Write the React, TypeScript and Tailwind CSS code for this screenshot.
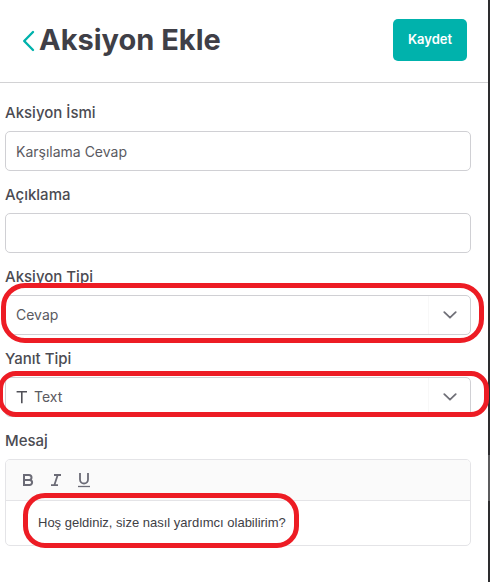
import { useState } from "react";
import type { ReactNode } from "react";

const labelClass = "block text-[15px] leading-5 font-medium text-[#4b4b52]";
const controlClass =
  "block h-10 w-full rounded-[5px] border border-[#d0d0d4] bg-white px-[10px] text-sm text-[#5a5a61] outline-none";

function Highlight({ className }: { className: string }) {
  return (
    <span
      aria-hidden="true"
      className={`pointer-events-none absolute z-10 border-[5px] border-[#ed1c24] ${className}`}
    />
  );
}

function TextField({ id, label, initial }: { id: string; label: string; initial: string }) {
  const [value, setValue] = useState(initial);
  return (
    <div className="flex flex-col gap-2">
      <label htmlFor={id} className={labelClass}>
        {label}
      </label>
      <input
        id={id}
        type="text"
        value={value}
        onChange={(e) => setValue(e.target.value)}
        className={controlClass}
      />
    </div>
  );
}

function SelectField({
  id,
  label,
  option,
  icon,
  highlight,
}: {
  id: string;
  label: string;
  option: string;
  icon?: ReactNode;
  highlight: string;
}) {
  return (
    <div className="flex flex-col gap-2">
      <label htmlFor={id} className={labelClass}>
        {label}
      </label>
      <div className="relative">
        <select id={id} className={`${controlClass} appearance-none ${icon ? "pl-7" : ""}`}>
          <option>{option}</option>
        </select>
        {icon}
        <span className="pointer-events-none absolute inset-y-px right-px flex w-[42px] items-center justify-center border-l border-[#f8f8f8]">
          <svg width="14" height="8" viewBox="0 0 14 8" fill="none" stroke="#707078" strokeWidth="1.8" strokeLinecap="round" strokeLinejoin="round">
            <path d="M1.3 1.2 7 6.7l5.7-5.5" />
          </svg>
        </span>
        <Highlight className={highlight} />
      </div>
    </div>
  );
}

function ToolButton({ label, children }: { label: string; children: ReactNode }) {
  return (
    <button type="button" aria-label={label} className="flex h-7 w-7 items-center justify-center">
      <svg width="16" height="16" viewBox="0 0 16 16" fill="none" stroke="#6b6b76" strokeWidth="2">
        {children}
      </svg>
    </button>
  );
}

export default function App() {
  const [message, setMessage] = useState("Hoş geldiniz, size nasıl yardımcı olabilirim?");
  return (
    <div className="flex min-h-screen overflow-hidden bg-white font-['Inter','Liberation_Sans',sans-serif]">
      <main className="min-w-0 flex-1">
        <header className="flex h-[83px] items-center justify-between border-b border-[#d2d2d4] pr-[21px] pb-0.5 pl-[22px]">
          <div className="flex items-center gap-1">
            <button type="button" aria-label="Geri" className="flex pt-0.5">
              <svg width="13" height="22" viewBox="0 0 13 22" fill="none" stroke="#00b2ac" strokeWidth="2.4" strokeLinecap="round" strokeLinejoin="round">
                <path d="M11 2 2.2 11l8.8 9" />
              </svg>
            </button>
            <h1 className="text-[29px] leading-9 font-bold text-[#3f3f47]">Aksiyon Ekle</h1>
          </div>
          <button type="button" className="h-[42px] w-[74px] rounded-[5px] bg-[#00b2ac] text-[13px] font-semibold text-white">
            Kaydet
          </button>
        </header>

        <form className="flex flex-col gap-[14px] pt-5 pr-[17px] pl-[5px]">
          <TextField id="name" label="Aksiyon İsmi" initial="Karşılama Cevap" />
          <TextField id="description" label="Açıklama" initial="" />
          <SelectField
            id="action-type"
            label="Aksiyon Tipi"
            option="Cevap"
            highlight="-top-3 -bottom-2 -left-1 -right-[13px] rounded-[24px]"
          />
          <SelectField
            id="reply-type"
            label="Yanıt Tipi"
            option="Text"
            highlight="-top-[6px] bottom-0 -left-[7px] -right-[18px] rounded-[18px]"
            icon={
              <svg className="pointer-events-none absolute top-[13px] left-[11px]" width="12" height="14" viewBox="0 0 12 14" fill="none" stroke="#505057" strokeWidth="1.6">
                <path d="M.6 1.8h10.4M5.8 1.8v11.4" />
              </svg>
            }
          />
          <div className="flex flex-col gap-2">
            <label htmlFor="message" className={labelClass}>
              Mesaj
            </label>
            <div className="relative rounded-[5px] border border-[#e4e4e7]">
              <div className="flex h-[41px] items-center rounded-t-[4px] border-b border-[#e4e4e7] bg-[#fafafa] pl-2">
                <ToolButton label="Kalın">
                  <path d="M4 3h5a2.4 2.4 0 0 1 0 5H4zM4 8h5.6a2.5 2.5 0 0 1 0 5H4z" />
                </ToolButton>
                <ToolButton label="İtalik">
                  <path strokeWidth="1.8" d="M6 3h7M3 13.2h7M9.7 3 6.3 13.2" />
                </ToolButton>
                <ToolButton label="Altı çizili">
                  <path strokeWidth="1.8" d="M4 1v6.5a4 4 0 0 0 8 0V1" />
                  <path strokeWidth="1.3" d="M2 14.5h12" />
                </ToolButton>
              </div>
              <textarea
                id="message"
                rows={1}
                value={message}
                onChange={(e) => setMessage(e.target.value)}
                className="block h-11 w-full resize-none overflow-hidden bg-transparent px-8 py-3 font-['Liberation_Sans',Arial,sans-serif] text-[13px] leading-5 text-[#404045] outline-none"
              />
              <Highlight className="top-[33px] -bottom-[3px] left-[17px] w-[276px] rounded-[22px]" />
            </div>
          </div>
        </form>
      </main>
      <aside aria-hidden="true" className="flex w-[2px] shrink-0 flex-col bg-[#2d2d2f] pt-[455px]">
        <span className="h-[46px] bg-[#5c5c5e]" />
      </aside>
    </div>
  );
}
